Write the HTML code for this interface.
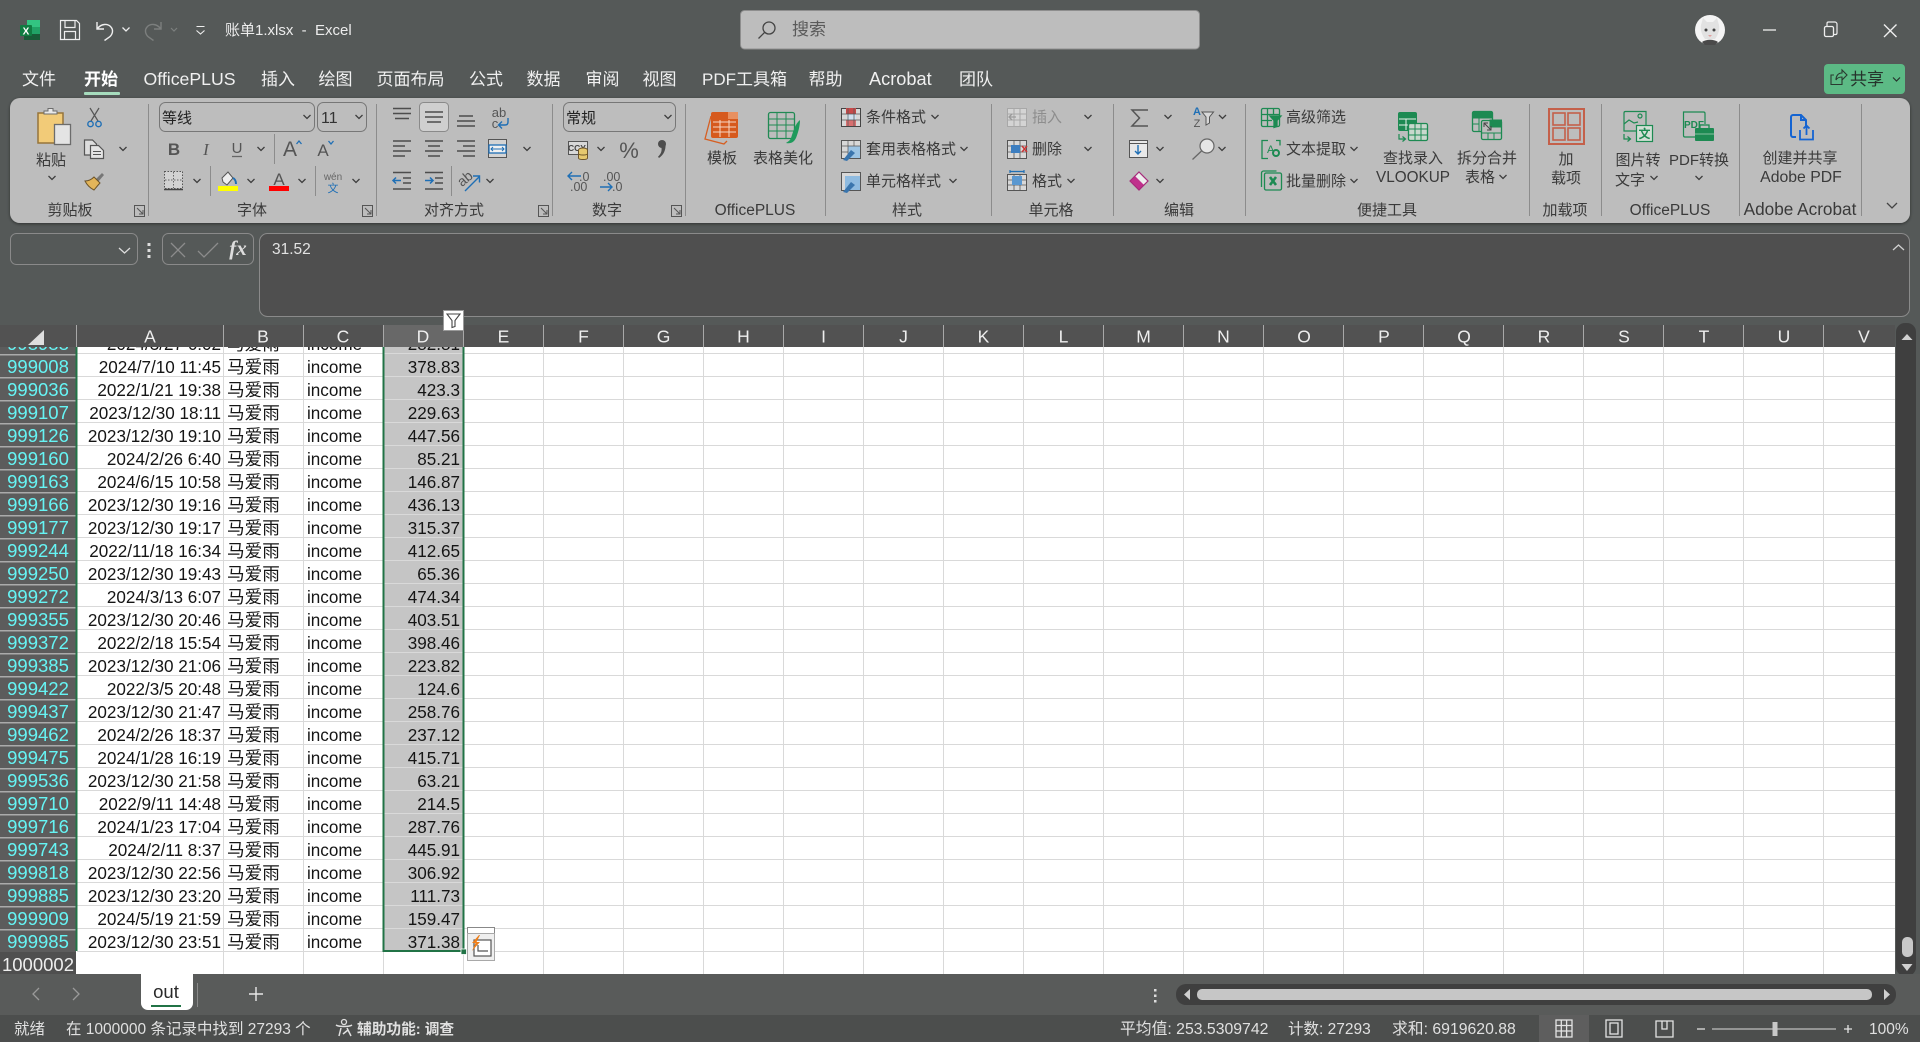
<!DOCTYPE html>
<html lang="zh"><head><meta charset="utf-8"><title>账单1.xlsx - Excel</title>
<style>
html,body{margin:0;padding:0;width:1920px;height:1042px;overflow:hidden;background:#555958;font-family:"Liberation Sans","Noto Sans CJK SC",sans-serif}
.a{position:absolute}
#g{left:0;top:347px;width:1895px;height:627px;overflow:hidden;background:#fff}
#v{left:77px;top:0;width:1818px;height:627px;background:repeating-linear-gradient(90deg,transparent 0 66px,#d9d9d9 66px 67px,transparent 67px 80px)}
#ca{left:78px;top:0;width:144px;height:627px;background:#fff}
#d{left:384px;top:0;width:79px;height:604px;background:#c5c5c5}
#h{left:77px;top:0;width:1818px;height:627px;background:repeating-linear-gradient(180deg,transparent 0 6px,#d9d9d9 6px 7px,transparent 7px 23px)}
#rh{left:0;top:0;width:76px;height:627px;background:repeating-linear-gradient(180deg,#5c5c5c 0 7px,#aaa 7px 8.5px,#5c5c5c 8.5px 23px)}
#rows{left:0;top:-16px;width:470px}
#rows p{margin:0;height:23px;position:relative;font-size:17.1px;line-height:23px;color:#151515}
#rows b,#rows i,#rows u,#rows s,#rows em{position:absolute;top:0;font-weight:400;font-style:normal;text-decoration:none;white-space:nowrap}
#rows b{left:0;width:76px;text-align:center;font-size:18.5px;color:#66f4f4;top:1px}
#rows i{right:249px;top:1.5px}
#rows u{left:227px;font-size:17.6px;top:2px}
#rows s{left:307px;top:1.5px}
#rows em{right:10px;top:1.5px}
#ov{left:0;top:0;width:1920px;height:1042px}
svg text{white-space:pre}
</style></head><body>
<div class="a" id="g">
<div class="a" id="v"></div><div class="a" id="ca"></div><div class="a" id="d"></div><div class="a" id="h"></div><div class="a" id="rh"></div>
<div class="a" id="rows">
<p><b>998988</b><i>2024/3/27 6:02</i><u>马爱雨</u><s>income</s><em>282.81</em></p>
<p><b>999008</b><i>2024/7/10 11:45</i><u>马爱雨</u><s>income</s><em>378.83</em></p>
<p><b>999036</b><i>2022/1/21 19:38</i><u>马爱雨</u><s>income</s><em>423.3</em></p>
<p><b>999107</b><i>2023/12/30 18:11</i><u>马爱雨</u><s>income</s><em>229.63</em></p>
<p><b>999126</b><i>2023/12/30 19:10</i><u>马爱雨</u><s>income</s><em>447.56</em></p>
<p><b>999160</b><i>2024/2/26 6:40</i><u>马爱雨</u><s>income</s><em>85.21</em></p>
<p><b>999163</b><i>2024/6/15 10:58</i><u>马爱雨</u><s>income</s><em>146.87</em></p>
<p><b>999166</b><i>2023/12/30 19:16</i><u>马爱雨</u><s>income</s><em>436.13</em></p>
<p><b>999177</b><i>2023/12/30 19:17</i><u>马爱雨</u><s>income</s><em>315.37</em></p>
<p><b>999244</b><i>2022/11/18 16:34</i><u>马爱雨</u><s>income</s><em>412.65</em></p>
<p><b>999250</b><i>2023/12/30 19:43</i><u>马爱雨</u><s>income</s><em>65.36</em></p>
<p><b>999272</b><i>2024/3/13 6:07</i><u>马爱雨</u><s>income</s><em>474.34</em></p>
<p><b>999355</b><i>2023/12/30 20:46</i><u>马爱雨</u><s>income</s><em>403.51</em></p>
<p><b>999372</b><i>2022/2/18 15:54</i><u>马爱雨</u><s>income</s><em>398.46</em></p>
<p><b>999385</b><i>2023/12/30 21:06</i><u>马爱雨</u><s>income</s><em>223.82</em></p>
<p><b>999422</b><i>2022/3/5 20:48</i><u>马爱雨</u><s>income</s><em>124.6</em></p>
<p><b>999437</b><i>2023/12/30 21:47</i><u>马爱雨</u><s>income</s><em>258.76</em></p>
<p><b>999462</b><i>2024/2/26 18:37</i><u>马爱雨</u><s>income</s><em>237.12</em></p>
<p><b>999475</b><i>2024/1/28 16:19</i><u>马爱雨</u><s>income</s><em>415.71</em></p>
<p><b>999536</b><i>2023/12/30 21:58</i><u>马爱雨</u><s>income</s><em>63.21</em></p>
<p><b>999710</b><i>2022/9/11 14:48</i><u>马爱雨</u><s>income</s><em>214.5</em></p>
<p><b>999716</b><i>2024/1/23 17:04</i><u>马爱雨</u><s>income</s><em>287.76</em></p>
<p><b>999743</b><i>2024/2/11 8:37</i><u>马爱雨</u><s>income</s><em>445.91</em></p>
<p><b>999818</b><i>2023/12/30 22:56</i><u>马爱雨</u><s>income</s><em>306.92</em></p>
<p><b>999885</b><i>2023/12/30 23:20</i><u>马爱雨</u><s>income</s><em>111.73</em></p>
<p><b>999909</b><i>2024/5/19 21:59</i><u>马爱雨</u><s>income</s><em>159.47</em></p>
<p><b>999985</b><i>2023/12/30 23:51</i><u>马爱雨</u><s>income</s><em>371.38</em></p>
<p><b style="color:#eee;background:#4f4f4f;height:23px;top:0;line-height:25px">1000002</b></p>
</div>
</div>

<svg class="a" id="ov" width="1920" height="1042" viewBox="0 0 1920 1042" xmlns="http://www.w3.org/2000/svg" font-family="'Liberation Sans','Noto Sans CJK SC',sans-serif">
<defs>
<polyline id="c" points="-3.5,-2 0,1.5 3.5,-2" fill="none" stroke="#3e3e3e" stroke-width="1.3"/>
<filter id="sh" x="-2%" y="-10%" width="104%" height="125%"><feDropShadow dx="0" dy="1" stdDeviation="1.5" flood-color="#000" flood-opacity=".45"/></filter>
</defs>

<!-- title bar -->
<rect x="27" y="20" width="13" height="7" fill="#33c481"/><rect x="27" y="27" width="13" height="7" fill="#21a366"/><rect x="24" y="34" width="16" height="6" fill="#185c37"/><rect x="20" y="25" width="12" height="11" rx="1" fill="#107c41"/>
<text x="26" y="34.5" font-size="10" font-weight="700" fill="#fff" text-anchor="middle">X</text>
<path d="M60.5 20.5h16l3 3v16h-19zM65 20.5v7h10v-7M64.5 39.5v-8h11v8" fill="none" stroke="#eee" stroke-width="1.2"/>
<path d="M97 22v7h7M97.5 28.5c4-5 10-5 13-2 3.5 3.5 2 8-1 10.5l-5 3.5" fill="none" stroke="#eee" stroke-width="1.4"/>
<g stroke="#7c7f7e"><path d="M161 22v7h-7M160.500 28.500c-4-5-10-5-13-2-3.500 3.500-2 8 1 10.500l5 3.500" fill="none" stroke-width="1.4"/></g>
<polyline points="171,28 174,31 177,28" fill="none" stroke="#7c7f7e" stroke-width="1.2"/>
<path d="M196.500 26.500h8M196.500 30.500l4 3.500 4-3.500" fill="none" stroke="#eee" stroke-width="1.1"/>
<polyline points="122.500,27.500 126,31 129.500,27.500" fill="none" stroke="#eee" stroke-width="1.3"/>
<text x="225" y="35" font-size="15" fill="#ececec">账单1.xlsx  -  Excel</text>

<rect x="740.500" y="10.500" width="459" height="38.500" rx="4" fill="#bdbdbd" stroke="#8e8e8e"/>
<circle cx="769" cy="28" r="6" fill="none" stroke="#444" stroke-width="1.3"/><path d="M764.500 32.500l-6 6" stroke="#444" stroke-width="1.3"/>
<text x="792" y="35" font-size="17" fill="#5a5a5a">搜索</text>

<circle cx="1710" cy="30" r="15" fill="#f4f4f4"/>
<path d="M1701 25l2-7 4 4h6l4-4 2 7c1 5-1 10-4 14h-10c-3-4-5-9-4-14z" fill="#e2e2e2"/><circle cx="1706" cy="30" r="1.5" fill="#444"/><circle cx="1714" cy="30" r="1.5" fill="#444"/><path d="M1702 42c4-3 12-3 16 0l-3 3h-10z" fill="#4a4a4a"/><path d="M1708 35h4l-2 2z" fill="#e0a0a0"/>
<path d="M1763 30h13" stroke="#eee" stroke-width="1.3"/>
<path d="M1827 26v-2.500c0-1 .7-1.500 1.500-1.500h6.500c1 0 2 1 2 2v9c0 1-.5 1.500-1.500 1.500H1833" fill="none" stroke="#eee" stroke-width="1.2"/><rect x="1824.500" y="26.500" width="9" height="10" rx="1.500" fill="none" stroke="#eee" stroke-width="1.3"/>
<path d="M1884 24.500l12.500 12.500M1896.500 24.500L1884 37" stroke="#eee" stroke-width="1.4"/>

<!-- tabs -->
<g font-size="17" fill="#f0f0f0">
<text x="22" y="85">文件</text>
<text x="84" y="85" font-weight="700" fill="#fff">开始</text>
<text x="143.500" y="85" font-size="17.7">OfficePLUS</text>
<text x="261" y="85">插入</text><text x="318.500" y="85">绘图</text><text x="376.500" y="85">页面布局</text><text x="469" y="85">公式</text><text x="526.500" y="85">数据</text><text x="585.500" y="85">审阅</text><text x="642.500" y="85">视图</text>
<text x="702" y="85">PDF工具箱</text><text x="808.500" y="85">帮助</text><text x="869" y="85" font-size="18.2">Acrobat</text><text x="959" y="85">团队</text>
</g>
<rect x="84" y="92" width="36" height="3" rx="1" fill="#a6dcbd"/>
<rect x="1824" y="64" width="81" height="30" rx="4" fill="#5cba85"/>
<path d="M1842 77v7.500h-11V75h3M1836 80c0-4 2-7 6-7v-3l5 5-5 5v-3c-3 0-5 1-6 3z" fill="none" stroke="#2a3a30" stroke-width="1.1"/>
<text x="1850" y="85" font-size="17" fill="#26332c">共享</text>
<polyline points="1893,77.500 1896.500,81 1900,77.500" fill="none" stroke="#26332c" stroke-width="1.2"/>

<!-- ribbon -->
<rect x="10" y="98" width="1900" height="125" rx="10" fill="#bdbdbd" filter="url(#sh)"/>
<g stroke="#8c8c8c" stroke-width="1">
<path d="M148.500 104v112M376.500 104v112M552.500 104v112M685.500 104v112M825.500 104v112M991.500 104v112M1113.500 104v112M1245.500 104v112M1529.500 104v112M1601.500 104v112M1739.500 104v112M1861.500 104v112"/>
<path d="M274.500 134v30M210.500 166v30M315.500 166v30M451.500 166v30"/>
</g>
<g font-size="15" fill="#3a3a3a" text-anchor="middle">
<text x="70" y="215">剪贴板</text><text x="252" y="215">字体</text><text x="454" y="215">对齐方式</text><text x="607" y="215">数字</text><text x="755" y="215" font-size="15.5">OfficePLUS</text><text x="907" y="215">样式</text><text x="1051" y="215">单元格</text><text x="1179" y="215">编辑</text><text x="1387" y="215">便捷工具</text><text x="1565" y="215">加载项</text><text x="1670" y="215" font-size="15.5">OfficePLUS</text><text x="1800" y="215" font-size="17.2">Adobe Acrobat</text>
</g>
<g fill="none" stroke="#555" stroke-width="1"><path d="M134.500 205.500v11h10v-11zM137 208l6 6M143 210v4h-4"/><path d="M362.500 205.500v11h10v-11zM365 208l6 6M371 210v4h-4"/><path d="M538.500 205.500v11h10v-11zM541 208l6 6M547 210v4h-4"/><path d="M671.500 205.500v11h10v-11zM674 208l6 6M680 210v4h-4"/></g>

<!-- clipboard -->
<rect x="38" y="113" width="25" height="30" fill="#f2cb78" stroke="#96743a" stroke-width="1.5"/>
<path d="M44 114v-3h4v-2.500h5V111h4v3z" fill="#e8e8e8" stroke="#6c6c6c"/>
<rect x="54.500" y="124.500" width="16" height="20" fill="#e4e4e4" stroke="#6c6c6c" stroke-width="1.3"/>
<text x="51" y="165" font-size="15" fill="#3a3a3a" text-anchor="middle">粘贴</text>
<use href="#c" x="52" y="178"/>
<path d="M90 108l8 13M99 108l-8 13" stroke="#555" stroke-width="1.2" fill="none"/>
<circle cx="90.500" cy="124" r="2.700" fill="none" stroke="#1f6fb5" stroke-width="1.4"/><circle cx="98.500" cy="124" r="2.700" fill="none" stroke="#1f6fb5" stroke-width="1.4"/>
<path d="M90 155h-5.500v-15h8l4 4v2" fill="#ddd" stroke="#555" stroke-width="1.2"/><path d="M90.500 145.500h8l5 5v8h-13z" fill="#e4e4e4" stroke="#555" stroke-width="1.2"/><path d="M93 151.500h8M93 154.500h8" stroke="#555"/>
<use href="#c" x="123" y="149"/>
<path d="M96 179l6-6 2 2-6 7z" fill="#777"/><path d="M85 181c4 0 7-2 9-4l6 6c-2 2-5 6-6 7-4-2-7-5-9-9z" fill="#e3b55a" stroke="#6c5328"/>
<!-- font -->
<rect x="159.500" y="102.500" width="155" height="29" rx="6" fill="none" stroke="#777"/>
<rect x="317.500" y="102.500" width="49" height="29" rx="6" fill="none" stroke="#777"/>
<text x="162" y="123" font-size="15" fill="#222">等线</text>
<text x="321" y="123" font-size="16" fill="#333">11</text>
<use href="#c" x="307" y="117"/><use href="#c" x="359" y="117"/>
<text x="174" y="155" font-size="17" font-weight="700" fill="#555" text-anchor="middle">B</text>
<text x="206" y="155" font-size="17" font-style="italic" fill="#555" text-anchor="middle" font-family="Liberation Serif">I</text>
<text x="237" y="153" font-size="15" fill="#555" text-anchor="middle">U</text><path d="M232 156.500h10" stroke="#666" stroke-width="1.3"/>
<use href="#c" x="261" y="149"/>
<text x="290" y="156" font-size="21" fill="#555" text-anchor="middle">A</text>
<path d="M296.500 144l2.500-3 2.500 3" fill="none" stroke="#1f6fb5" stroke-width="1.3"/>
<text x="323" y="156" font-size="17" fill="#555" text-anchor="middle">A</text>
<path d="M328.500 141l2.500 3 2.500-3" fill="none" stroke="#1f6fb5" stroke-width="1.3"/>
<rect x="164.500" y="171.500" width="18" height="17" fill="#d2d2d2" stroke="#555" stroke-dasharray="1.500 1.500"/>
<path d="M173.500 172v16M165 180h18" stroke="#666" stroke-dasharray="1.500 1.500"/><path d="M164 189.500h19" stroke="#444" stroke-width="1.5"/>
<use href="#c" x="197" y="181"/>
<path d="M222 178l6-6 5 6-6 7-4-3z" fill="#eee" stroke="#555"/><path d="M233 178c2 1 3 3 3 6" stroke="#1f6fb5" stroke-width="2" fill="none"/>
<rect x="218" y="186" width="20" height="5" fill="#ffff00"/>
<use href="#c" x="251" y="181"/>
<text x="279" y="185" font-size="17" fill="#555" text-anchor="middle">A</text>
<rect x="269" y="186" width="20" height="5" fill="#f00"/>
<use href="#c" x="302" y="181"/>
<text x="333" y="180" font-size="10" fill="#666" text-anchor="middle">wén</text>
<text x="333" y="192" font-size="11" fill="#1f6fb5" text-anchor="middle">文</text>
<use href="#c" x="356" y="181"/>
<!-- align -->
<rect x="419.500" y="102.500" width="29" height="29" rx="4" fill="#cfcfcf" stroke="#8a8a8a"/>
<g stroke="#4d4d4d" stroke-width="1.5">
<path d="M393 108.500h18M393 113.500h18M395 118.500h14"/>
<path d="M425 112h18M425 117h18M427 122h14"/>
<path d="M459 116h14M457 121h18M457 126h18"/>
<path d="M393 141h18M393 146h12M393 151h18M393 156h12"/>
<path d="M425 141h18M428 146h12M425 151h18M428 156h12"/>
<path d="M457 141h18M463 146h12M457 151h18M463 156h12"/>
<path d="M393 172.500h18M403 178h8M403 183h8M393 189h18"/>
<path d="M425 172.500h18M435 178h8M435 183h8M425 189h18"/>
</g>
<text x="499" y="117" font-size="13" fill="#555" text-anchor="middle">ab</text><text x="495" y="128" font-size="13" fill="#555" text-anchor="middle">c</text>
<path d="M508 118v4c0 2-1 3-3 3h-6M502 121.500l-3.500 3.500 3.500 3.500" fill="none" stroke="#1f6fb5" stroke-width="1.4"/>
<rect x="488.500" y="139.500" width="18" height="18" fill="#d4d4d4" stroke="#555"/><rect x="489" y="145" width="17" height="8" fill="#f1f1f1" stroke="#1f6fb5" stroke-width="1.3"/><path d="M491 149h13M493 147l-2 2 2 2M502 147l2 2-2 2" fill="none" stroke="#1f6fb5"/>
<use href="#c" x="527" y="149"/>
<path d="M401 180.500h-8M396 177.500l-3 3 3 3" stroke="#1f6fb5" stroke-width="1.5" fill="none"/>
<path d="M425 180.500h8M430 177.500l3 3-3 3" stroke="#1f6fb5" stroke-width="1.5" fill="none"/>
<text x="466" y="183" font-size="14" fill="#555" text-anchor="middle" transform="rotate(-40 466 180)">ab</text>
<path d="M465 191l14-14M473 176h6.500v6.500" fill="none" stroke="#1f6fb5" stroke-width="1.4"/>
<use href="#c" x="490" y="181"/>
<!-- number -->
<rect x="563.500" y="102.500" width="112" height="29" rx="6" fill="none" stroke="#777"/>
<text x="566" y="123" font-size="15" fill="#222">常规</text><use href="#c" x="668" y="117"/>
<rect x="568.500" y="141.500" width="19" height="13" fill="#d8d8d8" stroke="#555"/><text x="577" y="151" font-size="8.500" fill="#444" text-anchor="middle" font-weight="700">CCY</text>
<ellipse cx="583" cy="150" rx="4.500" ry="2" fill="#e6c86e" stroke="#6c5328"/><path d="M578.500 150v8c0 2 9 2 9 0v-8" fill="#e6c86e" stroke="#6c5328"/><path d="M578.500 153.500c0 2 9 2 9 0" fill="none" stroke="#6c5328"/>
<use href="#c" x="601" y="149"/>
<text x="629" y="158" font-size="22" fill="#555" text-anchor="middle">%</text>
<circle cx="662" cy="144" r="4" fill="#4d4d4d"/><path d="M665.500 144c.5 6-2 11-6.500 14l-1-1.200c2.500-2.500 4-5 3.500-8.800z" fill="#4d4d4d"/>
<path d="M581 176h-13M572 172l-4 4 4 4" fill="none" stroke="#1f6fb5" stroke-width="1.4"/>
<text x="579" y="181" font-size="12.5" fill="#555">.0</text><text x="570" y="191" font-size="12.5" fill="#555">.00</text>
<text x="603" y="181" font-size="12.5" fill="#555">.00</text><text x="612" y="191" font-size="12.5" fill="#555">.0</text>
<path d="M600 187h12M608 183l4 4-4 4" fill="none" stroke="#1f6fb5" stroke-width="1.4"/>
<!-- officeplus -->
<path d="M711 116l-6 23 19 5 3-3" fill="none" stroke="#d65f22" stroke-width="1.3"/>
<rect x="711" y="112" width="27" height="26" rx="2" fill="#d65a1e"/><rect x="728" y="112" width="10" height="7" fill="#e89060"/>
<path d="M713 122h23M713 127h23M713 132h23M720 120v17M729 120v17" stroke="#f6d8c6"/>
<rect x="768.500" y="112.500" width="26" height="26" rx="2" fill="none" stroke="#218a54" stroke-width="1.3"/><path d="M769 119h25M769 125h25M769 131h25M777 113v25M786 113v25" stroke="#218a54"/>
<path d="M800 120c-5 4-7 12-9 18-1 3-4 4-5 5 5 1 8-1 10-5 2-5 4-12 4-18z" fill="#1f9a5c"/>
<g font-size="15" fill="#3a3a3a" text-anchor="middle"><text x="722" y="163">模板</text><text x="783" y="163">表格美化</text></g>
<!-- styles -->
<g fill="#3a3a3a" font-size="15"><text x="866" y="122">条件格式</text><text x="866" y="154">套用表格格式</text><text x="866" y="186">单元格样式</text>
<text x="1032" y="122" fill="#8d8d8d">插入</text><text x="1032" y="154">删除</text><text x="1032" y="186">格式</text></g>
<use href="#c" x="935" y="117"/><use href="#c" x="964" y="149"/><use href="#c" x="953" y="181"/>
<rect x="841.500" y="108.500" width="19" height="18" fill="#d8d8d8" stroke="#444"/><rect x="846" y="108" width="10" height="6" fill="#c84a4a"/><rect x="846" y="120" width="10" height="6" fill="#d87070"/><rect x="847" y="114" width="9" height="6" fill="#cfe0ef"/><path d="M848 108v18M854 108v18M842 114h18M842 120h18" stroke="#555" stroke-width=".7"/>
<rect x="841.500" y="140.500" width="19" height="18" fill="#d8d8d8" stroke="#555"/><rect x="848" y="146" width="12" height="12" fill="#9cc4e4"/><path d="M848 140v18M854 140v6M842 146h18M842 152h6" stroke="#555" stroke-width=".7"/><path d="M843 160l8-10 4 3-8 8z" fill="#3a75ad"/>
<rect x="841.500" y="172.500" width="19" height="18" fill="#d8d8d8" stroke="#555"/><rect x="845" y="176" width="15" height="14" fill="#8fbbe0"/><path d="M843 192l8-10 4 3-8 8z" fill="#3a75ad"/>
<g><rect x="1007.500" y="108.500" width="19" height="18" fill="#d4d4d4" stroke="#a8a8a8"/><path d="M1014 108v18M1020 108v18M1008 114h18M1008 120h18" stroke="#a8a8a8"/><path d="M1016 117h-7M1012 114l-3 3 3 3" fill="none" stroke="#9a9a9a" stroke-width="1.3"/></g>
<g><rect x="1007.500" y="140.500" width="19" height="18" fill="#d8d8d8" stroke="#555"/><path d="M1014 140v18M1020 140v18M1008 146h18M1008 152h18" stroke="#555" stroke-width=".8"/><rect x="1011" y="145" width="9" height="8" fill="#3d7ec0"/><path d="M1022 146l5 6M1027 146l-5 6" stroke="#c33" stroke-width="1.4"/></g>
<g><rect x="1007.500" y="174.500" width="19" height="16" fill="#d8d8d8" stroke="#555"/><path d="M1014 174v16M1020 174v16M1008 180h18M1008 185h18" stroke="#555" stroke-width=".8"/><rect x="1012" y="176" width="10" height="9" fill="#5b98d0"/><path d="M1010 171.500h14M1010 170v3M1024 170v3" stroke="#1f6fb5" stroke-width="1.2"/></g>
<use href="#c" x="1088" y="117"/><use href="#c" x="1088" y="149"/><use href="#c" x="1071" y="181"/>
<!-- editing -->
<path d="M1148 110h-16l7.500 8-7.500 8h16" fill="none" stroke="#555" stroke-width="1.5"/>
<use href="#c" x="1168" y="117"/>
<text x="1197" y="115" font-size="11" font-weight="700" fill="#1f6fb5" text-anchor="middle">A</text><text x="1197" y="127" font-size="11" fill="#555" text-anchor="middle">Z</text>
<path d="M1202 112h11.500l-4 5v6l-3.500 2v-8z" fill="#d8d8d8" stroke="#555"/><use href="#c" x="1222.500" y="117"/>
<rect x="1129.500" y="140.500" width="18" height="17" fill="#e8e8e8" stroke="#555"/><path d="M1129 143.500h19" stroke="#555"/><path d="M1138 145v9M1135 151l3 3 3-3" fill="none" stroke="#1f6fb5" stroke-width="1.4"/><use href="#c" x="1160" y="149"/>
<circle cx="1207" cy="146" r="7" fill="#e6e6e6" stroke="#666" stroke-width="1.2"/><path d="M1201.500 151l-9 8.500" stroke="#666" stroke-width="1.3"/><use href="#c" x="1222" y="149"/>
<path d="M1130 181l9-9 9 9-9 9z" fill="#c0308c"/><path d="M1135 176l4-4 9 9-4 4z" fill="#eee"/><path d="M1130 181l9-9 9 9-9 9z" fill="none" stroke="#a62a7a" stroke-width="1.2"/><use href="#c" x="1160" y="181"/>
<!-- quick tools -->
<g fill="#3a3a3a" font-size="15"><text x="1286" y="122">高级筛选</text><text x="1286" y="154">文本提取</text><text x="1286" y="186">批量删除</text></g>
<use href="#c" x="1354" y="149"/><use href="#c" x="1354" y="181"/>
<g fill="none" stroke="#1d8a52" stroke-width="1.3">
<rect x="1261.500" y="108.500" width="18" height="18" rx="1.500"/><path d="M1262 114.500h18M1262 120.500h10M1267.500 109v17M1273.500 109v6"/>
<path d="M1270 116h11l-4 4.500v6l-3 1v-7z" fill="#1d8a52"/>
<path d="M1268 140.500h-6v18h6M1276 140.500h4v5"/>
<circle cx="1276" cy="153" r="3" stroke-width="2"/>
<rect x="1264.500" y="173" width="17" height="17" rx="1.500"/><path d="M1261.500 187v-14c0-1 1-2 2-2h13"/>
</g>
<text x="1267" y="153" font-size="11" fill="#1d8a52">A</text>
<path d="M1270 177l6 8M1276 177l-6 8" stroke="#1d8a52" stroke-width="2.6"/>
<g fill="none" stroke="#1d8a52"><rect x="1398.500" y="112.500" width="18" height="18" rx="1.500" fill="#1d8a52"/><path d="M1399 119h17M1399 125h9M1406 119v11" stroke="#e6f2ea"/><rect x="1408.500" y="123.500" width="19" height="17" rx="1.500" fill="#c8d8cd" stroke-width="1.3"/><path d="M1409 129h18M1409 135h18M1415 124v16M1421 124v16"/><path d="M1399 134v5h6M1402.500 136.500l3 2.500-3 2.500" stroke-width="1.2"/></g>
<text x="1413" y="163" font-size="15" fill="#3a3a3a" text-anchor="middle">查找录入</text><text x="1413" y="182" font-size="15.3" fill="#3a3a3a" text-anchor="middle">VLOOKUP</text>
<g fill="none" stroke="#1d8a52"><rect x="1472.500" y="111.500" width="20" height="20" rx="1.500" stroke-width="1.3"/><rect x="1473" y="112" width="19" height="6" fill="#1d8a52"/><path d="M1473 124h6M1479 118v13"/><rect x="1481.500" y="120.500" width="20" height="19" rx="1.500" fill="#bdbdbd" stroke-width="1.3"/><rect x="1490" y="120" width="11.500" height="7" fill="#1d8a52"/><path d="M1482 133h19M1488 133v6M1494 133v6"/><path d="M1484 123l7 7M1484 127v-4h4M1491 126v4h-4" stroke="#444"/></g>
<text x="1487" y="163" font-size="15" fill="#3a3a3a" text-anchor="middle">拆分合并</text><text x="1480" y="182" font-size="15" fill="#3a3a3a" text-anchor="middle">表格</text><use href="#c" x="1503" y="177"/>
<!-- addin -->
<rect x="1549" y="109" width="35" height="35" fill="none" stroke="#c4604a" stroke-width="2"/><g fill="none" stroke="#c4604a" stroke-width="1.6"><rect x="1553" y="113" width="12" height="12"/><rect x="1568" y="113" width="12" height="12"/><rect x="1553" y="128" width="12" height="12"/><rect x="1568" y="128" width="12" height="12"/></g>
<g font-size="15" fill="#3a3a3a" text-anchor="middle"><text x="1566" y="164">加</text><text x="1566" y="183">载项</text></g>
<!-- officeplus 2 -->
<g fill="none" stroke="#1d8a52" stroke-width="1.2"><path d="M1636 131h-12v-18c0-1 .5-1.500 1.500-1.500H1646v14"/><path d="M1624 124l5-4 5 3 4-1"/><circle cx="1640" cy="116" r="2"/><path d="M1624 134v5h6M1627.500 136.500l3 2.500-3 2.500"/><rect x="1636.500" y="125.500" width="16" height="16" fill="#d3dfd6"/></g>
<text x="1644.500" y="138" font-size="12" fill="#1d8a52" text-anchor="middle" font-weight="700">文</text>
<g fill="none" stroke="#1d8a52" stroke-width="1.2"><path d="M1696 137h-11c-1 0-1.500-.5-1.500-1.500V112h20c1 0 1.500.5 1.500 1.500V124"/></g>
<text x="1694" y="128" font-size="10" font-weight="700" fill="#1d8a52" text-anchor="middle">PDF</text>
<rect x="1695" y="128" width="19" height="13" rx="1" fill="#1d8a52"/><rect x="1700" y="125" width="9" height="4" fill="none" stroke="#1d8a52" stroke-width="1.3"/><path d="M1695 134h19" stroke="#86c0a0"/>
<g font-size="15" fill="#3a3a3a" text-anchor="middle"><text x="1638" y="165">图片转</text><text x="1630" y="185">文字</text><text x="1699" y="165" font-size="15">PDF转换</text></g>
<use href="#c" x="1654" y="178"/><use href="#c" x="1699" y="178"/>
<!-- adobe -->
<path d="M1796 137h-3c-1 0-2-1-2-2v-18c0-1 1-2 2-2h8l5 5v6M1801 115v5h5" fill="none" stroke="#1464d2" stroke-width="2"/><path d="M1800 130v9.500h13V130M1806.500 135v-9M1803.500 128.500l3-3 3 3" fill="none" stroke="#1464d2" stroke-width="1.800"/>
<g font-size="15" fill="#3a3a3a" text-anchor="middle"><text x="1800" y="163">创建并共享</text><text x="1801" y="182" font-size="15.800">Adobe PDF</text></g>
<path d="M1887 203l5 5 5-5" fill="none" stroke="#444" stroke-width="1.3"/>

<!-- formula bar -->
<rect x="10.500" y="233.500" width="127" height="31" rx="6" fill="none" stroke="#8a8a8a"/>
<path d="M119 248l5.500 5 5.500-5" fill="none" stroke="#ddd" stroke-width="1.3"/>
<g fill="#ddd"><rect x="147.500" y="243" width="3" height="3"/><rect x="147.500" y="249" width="3" height="3"/><rect x="147.500" y="255" width="3" height="3"/></g>
<rect x="162.500" y="233.500" width="91" height="31" rx="6" fill="none" stroke="#8a8a8a"/>
<path d="M171 243l14 14M185 243l-14 14" stroke="#8c8c8c" stroke-width="1.3"/>
<path d="M198 251l6 6 14-14" fill="none" stroke="#8c8c8c" stroke-width="1.3"/>
<text x="238" y="255" font-size="21" font-style="italic" font-weight="700" fill="#ddd" text-anchor="middle" font-family="Liberation Serif">fx</text>
<rect x="259.500" y="233.500" width="1650" height="83" rx="8" fill="#4f4f4f" stroke="#8a8a8a"/>
<text x="272" y="254" font-size="15.500" fill="#e2e2e2">31.52</text>
<path d="M1893 250l5.500-5 5.500 5" fill="none" stroke="#d0d0d0" stroke-width="1.3"/>

<!-- column headers -->
<rect x="0" y="325" width="1895" height="22" fill="#525252"/>
<rect x="383" y="325" width="80" height="22" fill="#686868"/>
<path d="M28 345h16v-15z" fill="#dedede"/>
<g stroke="#a8a8a8"><path d="M76.500 325v22M223.500 325v22M303.500 325v22M383.500 325v22M463.500 325v22M543.500 325v22M623.500 325v22M703.500 325v22M783.500 325v22M863.500 325v22M943.500 325v22M1023.500 325v22M1103.500 325v22M1183.500 325v22M1263.500 325v22M1343.500 325v22M1423.500 325v22M1503.500 325v22M1583.500 325v22M1663.500 325v22M1743.500 325v22M1823.500 325v22"/></g>
<g font-size="17.5" fill="#eee" text-anchor="middle"><text x="150" y="342.500">A</text><text x="263" y="342.500">B</text><text x="343" y="342.500">C</text><text x="423" y="342.500">D</text><text x="503.500" y="342.500">E</text><text x="583.500" y="342.500">F</text><text x="663.500" y="342.500">G</text><text x="743.500" y="342.500">H</text><text x="823.500" y="342.500">I</text><text x="903.500" y="342.500">J</text><text x="983.500" y="342.500">K</text><text x="1063.500" y="342.500">L</text><text x="1143.500" y="342.500">M</text><text x="1223.500" y="342.500">N</text><text x="1304" y="342.500">O</text><text x="1384" y="342.500">P</text><text x="1464" y="342.500">Q</text><text x="1544" y="342.500">R</text><text x="1624" y="342.500">S</text><text x="1704" y="342.500">T</text><text x="1784" y="342.500">U</text><text x="1864" y="342.500">V</text></g>
<rect x="75.500" y="347" width="2" height="604" fill="#217346"/>
<!-- selection -->
<path d="M383.500 347v604h80V347" fill="none" stroke="#217346" stroke-width="2"/>
<rect x="461" y="949" width="5.500" height="5.500" fill="#217346" stroke="#fff" stroke-width=".8"/>
<rect x="443.500" y="310.500" width="20" height="20" fill="#fff" stroke="#9a9a9a"/>
<path d="M447 314h13l-5 6.500v6l-3 1v-7z" fill="#fff" stroke="#444" stroke-width="1.1"/>
<rect x="467.500" y="927.500" width="27" height="12" fill="#fff" stroke="#888"/>
<rect x="467.500" y="933.500" width="27" height="27" fill="#efefef" stroke="#a8a8a8"/>
<rect x="474" y="940" width="17" height="16" fill="#fff" stroke="#555" stroke-width="1.2"/><path d="M478 945v6h10" fill="none" stroke="#555" stroke-width="1.2"/>
<path d="M479 935l-7 8h3.500l-3.500 8 8-9h-3.500l3.500-7z" fill="#ee7f1a"/>

<!-- right scrollbar -->
<rect x="1896" y="323" width="20" height="653" rx="9" fill="#3f3f3f"/>
<path d="M1901.500 340l5.500-6 5.500 6z" fill="#d0d0d0"/>
<rect x="1902" y="937" width="11" height="20" rx="5" fill="#c8c8c8"/>
<path d="M1901.500 964l5.500 7 5.500-7z" fill="#d0d0d0"/>

<!-- sheet tabs -->
<rect x="0" y="974" width="1920" height="41" fill="#595b5a"/>
<path d="M141 974h52v29a7 7 0 0 1-7 7h-38a7 7 0 0 1-7-7z" fill="#fff"/>
<text x="166" y="998" font-size="18.500" fill="#2a2a2a" text-anchor="middle">out</text>
<rect x="151" y="1005" width="30" height="2" fill="#217346"/>
<path d="M197.500 983v24" stroke="#8a8a8a"/>
<path d="M39 988l-6 6 6 6M73 988l6 6-6 6" fill="none" stroke="#9a9a9a" stroke-width="1.3"/>
<path d="M256 987v14M249 994h14" stroke="#e8e8e8" stroke-width="1.4"/>
<g fill="#ddd"><rect x="1154" y="989" width="2.500" height="2.500"/><rect x="1154" y="994.500" width="2.500" height="2.500"/><rect x="1154" y="1000" width="2.500" height="2.500"/></g>
<rect x="1176" y="984" width="720" height="21" rx="10" fill="#3f3f3f"/>
<rect x="1197" y="989" width="675" height="11" rx="5" fill="#c6c6c6"/>
<path d="M1190 989v11l-6-5.500zM1884 989v11l6-5.500z" fill="#d0d0d0"/>

<!-- status bar -->
<rect x="0" y="1015" width="1920" height="27" fill="#4c4e4d"/>
<rect x="1539" y="1015" width="50" height="27" fill="#5e5e5e"/>
<g font-size="15.5" fill="#e0e0e0">
<text x="14" y="1034">就绪</text><text x="66" y="1034">在 1000000 条记录中找到 27293 个</text>
<text x="357" y="1034" font-weight="700" font-size="14.700">辅助功能: 调查</text>
<text x="1120" y="1034" font-size="15.800">平均值: 253.5309742</text><text x="1288" y="1034" font-size="15.500">计数: 27293</text><text x="1392" y="1034" font-size="15.800">求和: 6919620.88</text>
<text x="1869" y="1034" font-size="15.500">100%</text>
</g>
<circle cx="344" cy="1022" r="2.500" fill="none" stroke="#e0e0e0" stroke-width="1.3"/><path d="M336 1025c3 2 13 2 16 0M341 1028l-2 8M347 1028l4 8M343 1034l5-4" fill="none" stroke="#e0e0e0" stroke-width="1.5"/>
<g fill="none" stroke="#e4e4e4" stroke-width="1.3">
<rect x="1556" y="1020" width="16" height="17"/><path d="M1556 1025.500h16M1556 1031h16M1561.300 1020v17M1566.600 1020v17"/>
<rect x="1606" y="1020" width="16" height="17"/><rect x="1610" y="1023" width="8" height="11"/>
<path d="M1656 1021h17v16h-17zM1662 1021v8h5v-8"/>
<path d="M1697 1029h8M1844 1029h8M1848 1025v8"/>
</g>
<path d="M1712 1029h124" stroke="#dcdcdc"/><rect x="1772.500" y="1022" width="5" height="14" fill="#c8c8c8"/>
</svg>
</body></html>
